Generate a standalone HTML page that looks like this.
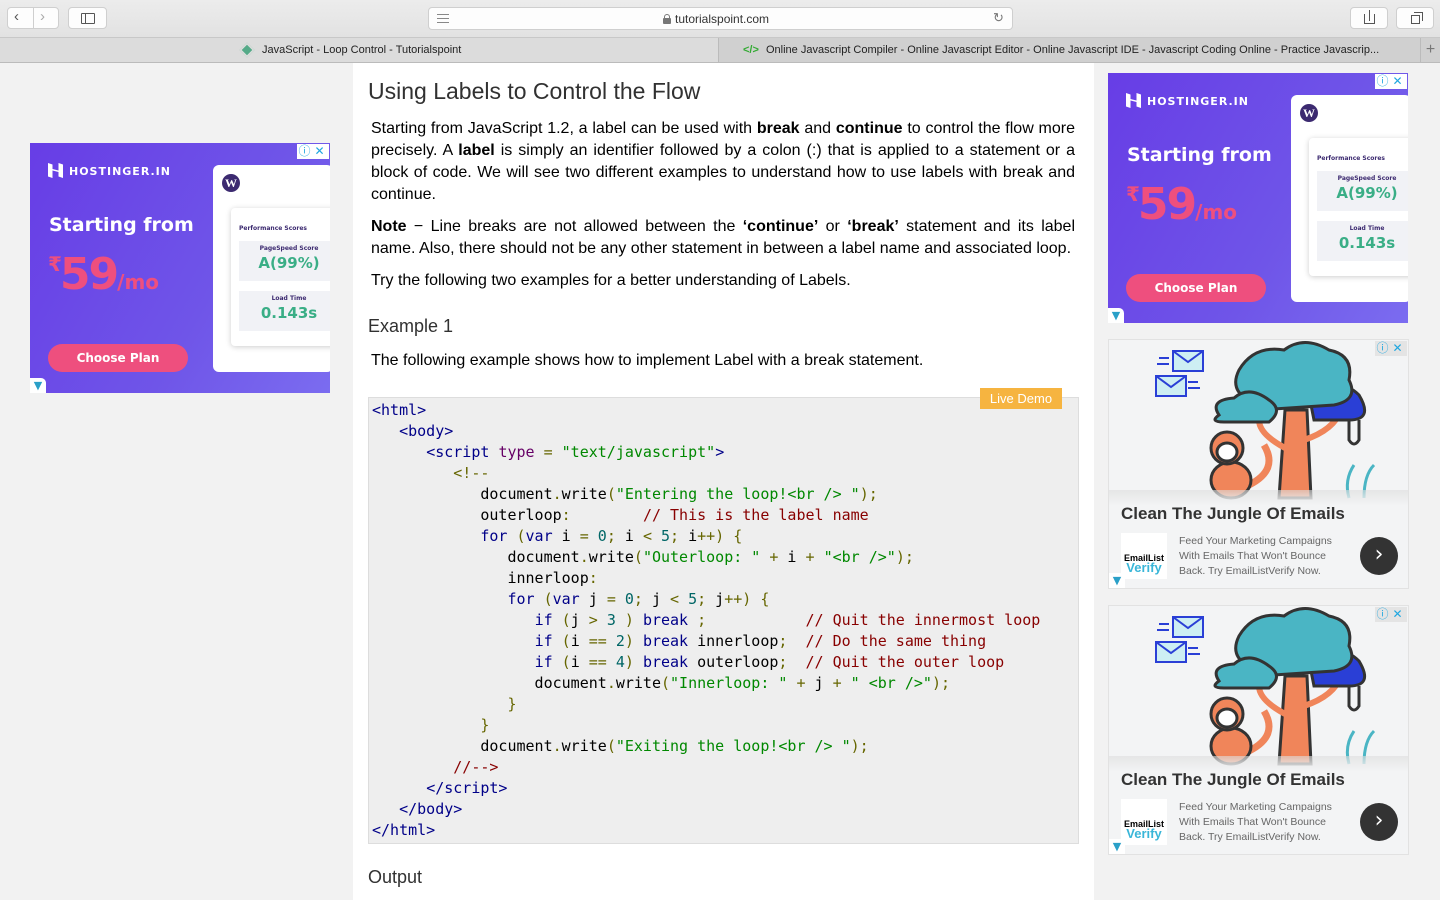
<!DOCTYPE html>
<html><head><meta charset="utf-8">
<style>
*{box-sizing:border-box;margin:0;padding:0}
body{width:1440px;height:900px;overflow:hidden;background:#f2f2f2;font-family:"Liberation Sans",Arial,sans-serif;position:relative}
.abs{position:absolute}
#top{left:0;top:0;width:1440px;height:38px;background:linear-gradient(#ececec,#e2e2e2);border-bottom:1px solid #c8c8c8}
.btn{position:absolute;background:#fdfdfd;border:1px solid #cfcfcf;border-radius:4px;height:22px;top:7px}
#tabs{left:0;top:38px;width:1440px;height:25px;background:#d0d0d0;border-bottom:1px solid #bbb}
.tab{position:absolute;top:0;height:24px;font-size:11px;color:#222;line-height:24px;white-space:nowrap;overflow:hidden}
#main{left:353px;top:63px;width:741px;height:837px;background:#fff}
.t{position:absolute;left:371px;width:704px;font-size:16px;color:#000;line-height:22px;white-space:nowrap;text-align:justify;text-align-last:justify}
.t.n{text-align-last:left}
pre{position:absolute;left:368px;top:397px;width:711px;height:447px;background:#eee;border:1px solid #ddd;font-family:"DejaVu Sans Mono","Liberation Mono",monospace;font-size:15px;line-height:21px;padding:2px 0 0 3px;color:#000}
.tg{color:#008}.at{color:#606}.s{color:#080}.p{color:#660}.k{color:#008}.c{color:#800}.l{color:#066}
.had{position:absolute;width:300px;height:250px;background:linear-gradient(120deg,#673de6 0%,#6f55e8 60%,#7b6cf0 100%);overflow:hidden;font-family:"DejaVu Sans","Liberation Sans",sans-serif}
.had .logo{position:absolute;left:18px;top:20px;color:#fff;font-weight:bold;font-size:11px;letter-spacing:1px}
.had .logo b{display:inline-block;width:15px;height:15px;background:#fff;vertical-align:-3px;margin-right:6px;clip-path:polygon(0 0,30% 10%,30% 40%,70% 50%,70% 0,100% 10%,100% 100%,70% 90%,70% 60%,30% 50%,30% 100%,0 90%)}
.had .sf{position:absolute;left:19px;top:71px;color:#fff;font-weight:bold;font-size:19px}
.had .pr{position:absolute;left:18px;top:106px;color:#ee4f7e;font-weight:bold;font-size:44px;letter-spacing:-2px}
.had .pr small{font-size:20px;letter-spacing:0}
.had .pr sup{font-size:20px;vertical-align:18px}
.had .cp{position:absolute;left:18px;top:201px;width:140px;height:28px;border-radius:14px;background:#ee4f7e;color:#fff;font-weight:bold;font-size:12px;text-align:center;line-height:28px}
.had .wp{position:absolute;left:183px;top:22px;width:120px;height:207px;background:#fff;border-radius:6px}
.had .wp i{position:absolute;left:9px;top:9px;width:18px;height:18px;border-radius:50%;background:#3c2a70;color:#fff;font-size:12px;font-style:normal;font-weight:bold;text-align:center;line-height:18px;font-family:"Liberation Serif",serif}
.had .cd{position:absolute;left:18px;top:43px;width:110px;height:138px;background:#fff;box-shadow:0 1px 6px rgba(0,0,0,.2);border-radius:4px;font-size:6px;color:#3c2a70;font-weight:bold}
.had .cd .h{position:absolute;left:8px;top:17px}
.had .bx{position:absolute;left:8px;width:100px;height:40px;background:#f1f2f6;text-align:center}
.had .bx div{font-size:6px;margin-top:4px}
.had .bx span{display:block;font-size:15px;color:#3aae86;margin-top:2px}
.adc{position:absolute;right:1px;top:1px;width:32px;height:15px;background:#fff;font-size:12px;color:#1fa7e0;line-height:15px}
.adc span{display:inline-block;width:15px;text-align:center}
.adt{position:absolute;left:0;bottom:0;width:16px;height:15px;background:#fff;border-radius:0 5px 0 0;color:#2aa0c8;font-size:11px;text-align:center;line-height:15px}
.jad{position:absolute;width:301px;height:250px;background:#f3f4f5;border:1px solid #e2e2e2;overflow:hidden;font-family:"DejaVu Sans","Liberation Sans",sans-serif}
.jad .ti{position:absolute;left:12px;top:164px;font-weight:bold;color:#333;font-family:"Liberation Sans",sans-serif;font-size:17px}
.jad .lg{position:absolute;left:12px;top:193px;width:46px;height:46px;background:#fff;font-size:9px;font-weight:bold;line-height:10px;padding-top:20px;text-align:center;font-family:"Liberation Sans",sans-serif}
.jad .lg em{display:block;color:#3ab6d8;font-size:13px;font-style:normal}
.jad .tx{position:absolute;left:70px;top:194px;font-size:10.5px;line-height:15px;color:#666;font-family:"Liberation Sans",sans-serif}
.jad .ar{position:absolute;left:251px;top:197px;width:38px;height:38px;border-radius:50%;background:#333;color:#fff;text-align:center;line-height:36px;font-size:22px}
.jad .sh{position:absolute;left:0;top:150px;width:301px;height:16px;background:linear-gradient(rgba(220,220,220,.6),#f3f4f5)}
</style></head><body>
<div id="top" class="abs">
 <div class="btn" style="left:7px;width:52px"></div>
 <div class="abs" style="left:33px;top:7px;width:1px;height:22px;background:#cfcfcf"></div>
 <div class="abs" style="left:14px;top:8px;font-size:15px;color:#555">&#x2039;</div>
 <div class="abs" style="left:40px;top:8px;font-size:15px;color:#aaa">&#x203A;</div>
 <div class="btn" style="left:68px;width:39px"><div class="abs" style="left:12px;top:5px;width:14px;height:11px;border:1px solid #555;border-radius:1px"></div><div class="abs" style="left:16px;top:5px;width:1px;height:11px;background:#555"></div></div>
 <div class="btn" style="left:428px;width:585px;top:7px;height:23px">
  <div class="abs" style="left:8px;top:6px;width:12px;height:9px;border-top:1px solid #888;border-bottom:1px solid #888"></div>
  <div class="abs" style="left:8px;top:10px;width:12px;height:1px;background:#888"></div>
  <div class="abs" style="left:235px;top:6px;width:6px;height:4px;border:1px solid #777;border-bottom:none;border-radius:3px 3px 0 0"></div>
  <div class="abs" style="left:234px;top:10px;width:8px;height:6px;background:#777;border-radius:1px"></div>
  <div class="abs" style="left:246px;top:4px;font-size:12px;color:#333">tutorialspoint.com</div>
  <div class="abs" style="left:564px;top:2px;font-size:13px;color:#777">&#x21BB;</div>
 </div>
 <div class="btn" style="left:1350px;width:38px"><div class="abs" style="left:13px;top:6px;width:11px;height:10px;border:1px solid #555;border-top:none"></div><div class="abs" style="left:18px;top:2px;width:1px;height:11px;background:#555"></div></div>
 <div class="btn" style="left:1396px;width:38px"><div class="abs" style="left:14px;top:7px;width:9px;height:9px;border:1px solid #555"></div><div class="abs" style="left:17px;top:4px;width:9px;height:9px;border-top:1px solid #555;border-right:1px solid #555"></div></div>
</div>
<div id="tabs" class="abs">
 <div class="tab" style="left:0;width:719px;background:#dcdcdc;border-right:1px solid #bbb"><span style="position:absolute;left:240px;top:5px;width:14px;height:14px;background:#5a8;transform:rotate(45deg) scale(.75);border:2px solid #ddd"></span><span style="position:absolute;left:262px">JavaScript - Loop Control - Tutorialspoint</span></div>
 <div class="tab" style="left:720px;width:700px"><span style="position:absolute;left:23px;color:#3a3;font-weight:bold">&lt;/&gt;</span><span style="position:absolute;left:46px">Online Javascript Compiler - Online Javascript Editor - Online Javascript IDE - Javascript Coding Online - Practice Javascrip...</span></div>
 <div class="tab" style="left:1420px;width:20px;font-size:16px;color:#777;text-align:center;border-left:1px solid #bbb">+</div>
</div>
<div id="main" class="abs"></div>
<div class="abs" style="left:368px;top:78px;font-size:23px;color:#313131">Using Labels to Control the Flow</div>
<div class="t" style="top:118px">Starting from JavaScript 1.2, a label can be used with <b>break</b> and <b>continue</b> to control the flow more</div>
<div class="t" style="top:140px">precisely. A <b>label</b> is simply an identifier followed by a colon (:) that is applied to a statement or a</div>
<div class="t" style="top:162px">block of code. We will see two different examples to understand how to use labels with break and</div>
<div class="t n" style="top:184px">continue.</div>
<div class="t" style="top:216px"><b>Note</b> &minus; Line breaks are not allowed between the <b>‘continue’</b> or <b>‘break’</b> statement and its label</div>
<div class="t n" style="top:238px">name. Also, there should not be any other statement in between a label name and associated loop.</div>
<div class="t n" style="top:270px">Try the following two examples for a better understanding of Labels.</div>
<div class="abs" style="left:368px;top:316px;font-size:18px;color:#313131">Example 1</div>
<div class="t n" style="top:350px">The following example shows how to implement Label with a break statement.</div>
<pre><span class="tg">&lt;html&gt;</span>
   <span class="tg">&lt;body&gt;</span>
      <span class="tg">&lt;script</span> <span class="at">type</span> <span class="p">=</span> <span class="s">"text/javascript"</span><span class="tg">&gt;</span>
         <span class="p">&lt;!--</span>
            document<span class="p">.</span>write<span class="p">(</span><span class="s">"Entering the loop!&lt;br /&gt; "</span><span class="p">);</span>
            outerloop<span class="p">:</span>        <span class="c">// This is the label name</span>
            <span class="k">for</span> <span class="p">(</span><span class="k">var</span> i <span class="p">=</span> <span class="l">0</span><span class="p">;</span> i <span class="p">&lt;</span> <span class="l">5</span><span class="p">;</span> i<span class="p">++)</span> <span class="p">{</span>
               document<span class="p">.</span>write<span class="p">(</span><span class="s">"Outerloop: "</span> <span class="p">+</span> i <span class="p">+</span> <span class="s">"&lt;br /&gt;"</span><span class="p">);</span>
               innerloop<span class="p">:</span>
               <span class="k">for</span> <span class="p">(</span><span class="k">var</span> j <span class="p">=</span> <span class="l">0</span><span class="p">;</span> j <span class="p">&lt;</span> <span class="l">5</span><span class="p">;</span> j<span class="p">++)</span> <span class="p">{</span>
                  <span class="k">if</span> <span class="p">(</span>j <span class="p">&gt;</span> <span class="l">3</span> <span class="p">)</span> <span class="k">break</span> <span class="p">;</span>           <span class="c">// Quit the innermost loop</span>
                  <span class="k">if</span> <span class="p">(</span>i <span class="p">==</span> <span class="l">2</span><span class="p">)</span> <span class="k">break</span> innerloop<span class="p">;</span>  <span class="c">// Do the same thing</span>
                  <span class="k">if</span> <span class="p">(</span>i <span class="p">==</span> <span class="l">4</span><span class="p">)</span> <span class="k">break</span> outerloop<span class="p">;</span>  <span class="c">// Quit the outer loop</span>
                  document<span class="p">.</span>write<span class="p">(</span><span class="s">"Innerloop: "</span> <span class="p">+</span> j <span class="p">+</span> <span class="s">" &lt;br /&gt;"</span><span class="p">);</span>
               <span class="p">}</span>
            <span class="p">}</span>
            document<span class="p">.</span>write<span class="p">(</span><span class="s">"Exiting the loop!&lt;br /&gt; "</span><span class="p">);</span>
         <span class="c">//--&gt;</span>
      <span class="tg">&lt;/script&gt;</span>
   <span class="tg">&lt;/body&gt;</span>
<span class="tg">&lt;/html&gt;</span></pre>
<div class="abs" style="left:980px;top:388px;width:82px;height:21px;background:#f6b440;color:#fff;font-size:13px;text-align:center;line-height:21px">Live Demo</div>
<div class="abs" style="left:368px;top:867px;font-size:18px;color:#313131">Output</div>

<div class="had" style="left:30px;top:143px">
 <div class="logo"><b></b>HOSTINGER.IN</div>
 <div class="sf">Starting from</div>
 <div class="pr"><sup>₹</sup>59<small>/mo</small></div>
 <div class="cp">Choose Plan</div>
 <div class="wp"><i>W</i><div class="cd"><div class="h">Performance Scores</div><div class="bx" style="top:33px"><div>PageSpeed Score</div><span>A(99%)</span></div><div class="bx" style="top:83px"><div>Load Time</div><span>0.143s</span></div></div></div>
 <div class="adc"><span>&#9432;</span><span>&#x2715;</span></div>
 <div class="adt">&#9660;</div>
</div>
<div class="had" style="left:1108px;top:73px">
 <div class="logo"><b></b>HOSTINGER.IN</div>
 <div class="sf">Starting from</div>
 <div class="pr"><sup>₹</sup>59<small>/mo</small></div>
 <div class="cp">Choose Plan</div>
 <div class="wp"><i>W</i><div class="cd"><div class="h">Performance Scores</div><div class="bx" style="top:33px"><div>PageSpeed Score</div><span>A(99%)</span></div><div class="bx" style="top:83px"><div>Load Time</div><span>0.143s</span></div></div></div>
 <div class="adc"><span>&#9432;</span><span>&#x2715;</span></div>
 <div class="adt">&#9660;</div>
</div>

<div class="jad" style="left:1108px;top:339px">
 <svg class="abs" style="left:0;top:0" width="300" height="160" viewBox="0 0 300 160">
  <g stroke="#2a3fd6" stroke-width="2" fill="#cdeef3"><rect x="64" y="11" width="30" height="20"/><path d="M64 11l15 11 15-11" fill="none"/><rect x="47" y="36" width="30" height="20"/><path d="M47 36l15 11 15-11" fill="none"/><path d="M50 18h10M48 24h12M79 42h10M79 48h12" fill="none"/></g>
  <g stroke="#333" stroke-width="3">
   <path d="M170 158 L176 70 L198 70 L202 158 Z" fill="#f0855a"/>
   <path d="M180 110 Q150 95 150 80 M195 100 Q225 90 232 70" fill="none" stroke="#f0855a" stroke-width="6"/>
   <path d="M200 55 Q230 35 250 55 Q265 80 240 80 L205 80 Z" fill="#2a3fd6"/>
   <path d="M140 60 Q120 50 130 30 Q145 5 175 10 Q195 -5 220 10 Q245 15 240 40 Q250 60 225 65 L150 70 Q130 70 140 60Z" fill="#4ab5c4"/>
   <path d="M110 75 Q100 60 125 58 Q140 45 160 60 Q175 70 160 82 L115 82 Q100 82 110 75Z" fill="#4ab5c4"/>
   <path d="M240 80 L240 100 Q245 108 250 100 L250 80" fill="none"/>
   <path d="M140 145 Q170 130 155 105" fill="none" stroke="#f0855a" stroke-width="7"/>
   <ellipse cx="122" cy="140" rx="20" ry="18" fill="#f0855a"/>
   <circle cx="118" cy="108" r="16" fill="#f0855a"/>
   <ellipse cx="118" cy="112" rx="10" ry="9" fill="#fff"/>
   <path d="M240 158 Q235 140 245 125 M255 158 Q255 135 265 125" fill="none" stroke="#4ab5c4"/>
  </g>
 </svg>
 <div class="sh"></div>
 <div class="ti">Clean The Jungle Of Emails</div>
 <div class="lg">EmailList<em>Verify</em></div>
 <div class="tx">Feed Your Marketing Campaigns<br>With Emails That Won't Bounce<br>Back. Try EmailListVerify Now.</div>
 <div class="ar">&#x203A;</div>
 <div class="adc" style="background:#e4e4e4"><span>&#9432;</span><span>&#x2715;</span></div>
 <div class="adt">&#9660;</div>
</div>
<div class="jad" style="left:1108px;top:605px">
 <svg class="abs" style="left:0;top:0" width="300" height="160" viewBox="0 0 300 160">
  <g stroke="#2a3fd6" stroke-width="2" fill="#cdeef3"><rect x="64" y="11" width="30" height="20"/><path d="M64 11l15 11 15-11" fill="none"/><rect x="47" y="36" width="30" height="20"/><path d="M47 36l15 11 15-11" fill="none"/><path d="M50 18h10M48 24h12M79 42h10M79 48h12" fill="none"/></g>
  <g stroke="#333" stroke-width="3">
   <path d="M170 158 L176 70 L198 70 L202 158 Z" fill="#f0855a"/>
   <path d="M180 110 Q150 95 150 80 M195 100 Q225 90 232 70" fill="none" stroke="#f0855a" stroke-width="6"/>
   <path d="M200 55 Q230 35 250 55 Q265 80 240 80 L205 80 Z" fill="#2a3fd6"/>
   <path d="M140 60 Q120 50 130 30 Q145 5 175 10 Q195 -5 220 10 Q245 15 240 40 Q250 60 225 65 L150 70 Q130 70 140 60Z" fill="#4ab5c4"/>
   <path d="M110 75 Q100 60 125 58 Q140 45 160 60 Q175 70 160 82 L115 82 Q100 82 110 75Z" fill="#4ab5c4"/>
   <path d="M240 80 L240 100 Q245 108 250 100 L250 80" fill="none"/>
   <path d="M140 145 Q170 130 155 105" fill="none" stroke="#f0855a" stroke-width="7"/>
   <ellipse cx="122" cy="140" rx="20" ry="18" fill="#f0855a"/>
   <circle cx="118" cy="108" r="16" fill="#f0855a"/>
   <ellipse cx="118" cy="112" rx="10" ry="9" fill="#fff"/>
   <path d="M240 158 Q235 140 245 125 M255 158 Q255 135 265 125" fill="none" stroke="#4ab5c4"/>
  </g>
 </svg>
 <div class="sh"></div>
 <div class="ti">Clean The Jungle Of Emails</div>
 <div class="lg">EmailList<em>Verify</em></div>
 <div class="tx">Feed Your Marketing Campaigns<br>With Emails That Won't Bounce<br>Back. Try EmailListVerify Now.</div>
 <div class="ar">&#x203A;</div>
 <div class="adc" style="background:#e4e4e4"><span>&#9432;</span><span>&#x2715;</span></div>
 <div class="adt">&#9660;</div>
</div>
</body></html>
